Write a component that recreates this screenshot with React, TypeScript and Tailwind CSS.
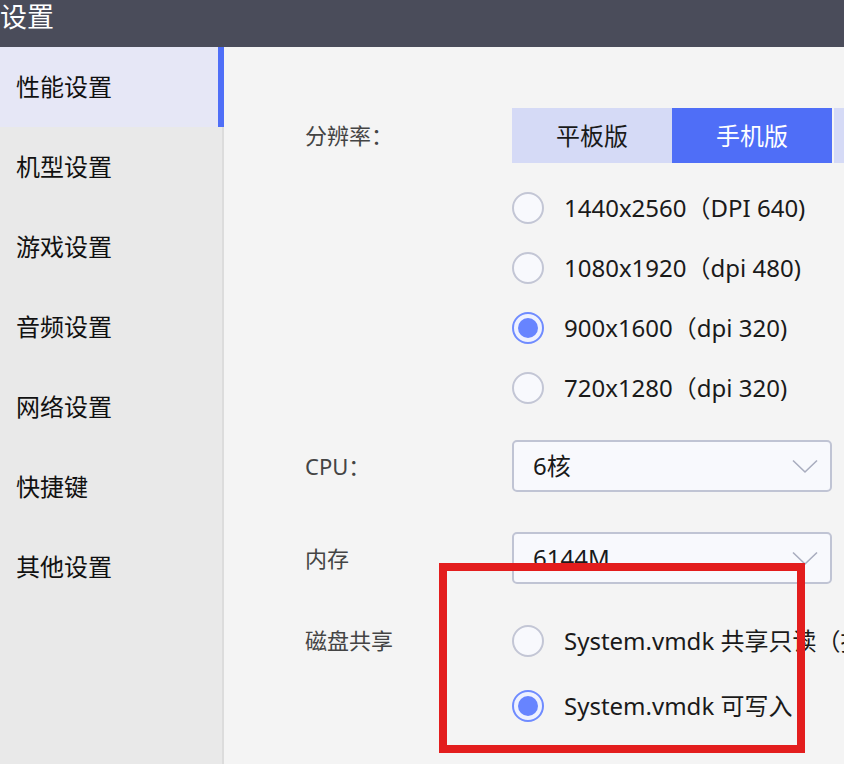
import React, { useState } from 'react';

const font = { fontFamily: '"Noto Sans", "Noto Sans CJK SC", sans-serif' };

const menu = ['性能设置', '机型设置', '游戏设置', '音频设置', '网络设置', '快捷键', '其他设置'];

const resolutions = [
  '1440x2560（DPI 640)',
  '1080x1920（dpi 480)',
  '900x1600（dpi 320)',
  '720x1280（dpi 320)',
];

function Radio({ checked }: { checked: boolean }) {
  if (checked) {
    return (
      <span className="flex h-[32px] w-[32px] shrink-0 items-center justify-center rounded-full border-2 border-[#6f8bff] bg-[#eef1ff]">
        <span className="h-[20px] w-[20px] rounded-full bg-[#6784ff]" />
      </span>
    );
  }
  return <span className="h-[32px] w-[32px] shrink-0 rounded-full border-2 border-[#c3c6d5] bg-[#f8f9fd]" />;
}

function Select({ value }: { value: string }) {
  return (
    <div className="flex h-[52px] w-[320px] items-center justify-between rounded-[5px] border-2 border-[#c0c4d4] bg-[#f8f9fd] pl-[19px] pr-[12px]">
      <span className="text-[24px] text-[#1a1a1a]">{value}</span>
      <svg width="26" height="15" viewBox="0 0 26 15" fill="none">
        <polyline points="1,1.5 13,13 25,1.5" stroke="#a9adbf" strokeWidth="1.6" />
      </svg>
    </div>
  );
}

export default function App() {
  const [active, setActive] = useState(0);
  const [tab, setTab] = useState(1);
  const [res, setRes] = useState(2);
  const [disk, setDisk] = useState(1);

  return (
    <div className="relative flex h-[764px] w-[844px] flex-col overflow-hidden bg-[#f4f4f4]" style={font}>
      <header className="h-[47px] shrink-0 bg-[#4a4c5a] text-[27px] leading-[34px] text-white">设置</header>

      <div className="flex flex-1">
        <aside className="flex w-[224px] shrink-0 flex-col bg-[#e9e9e9]">
          {menu.map((m, i) => (
            <button
              key={m}
              onClick={() => setActive(i)}
              className={
                i === active
                  ? 'flex h-[80px] items-center border-r-[6px] border-[#4f6ef7] bg-[#e6e7f6] pl-[16px] text-left text-[24px] text-[#111]'
                  : 'flex h-[80px] items-center border-r-2 border-[#dcdcdc] pl-[16px] text-left text-[24px] text-[#111]'
              }
            >
              {m}
            </button>
          ))}
          <div className="flex-1 border-r-2 border-[#dcdcdc]" />
        </aside>

        <main className="flex-1 overflow-hidden pl-[81px] pt-[61px]">
          <div className="flex items-center">
            <span className="w-[207px] shrink-0 text-[22px] text-[#444]">分辨率：</span>
            <div className="flex h-[55px] shrink-0 text-[24px]">
              {['平板版', '手机版'].map((t, i) => (
                <button
                  key={t}
                  onClick={() => setTab(i)}
                  className={
                    i === tab
                      ? 'flex w-[160px] items-center justify-center bg-[#4f6ef7] text-white'
                      : 'flex w-[160px] items-center justify-center bg-[#d5daf6] text-[#1a1a1a]'
                  }
                >
                  {t}
                </button>
              ))}
              <span className="ml-[2px] w-[160px] bg-[#d5daf6]" />
            </div>
          </div>

          <div className="ml-[207px] mt-[15px] flex flex-col">
            {resolutions.map((r, i) => (
              <button key={r} onClick={() => setRes(i)} className="flex h-[60px] items-center gap-[20px] whitespace-nowrap text-[24px] text-[#1a1a1a]">
                <Radio checked={res === i} />
                <span>{r}</span>
              </button>
            ))}
          </div>

          <div className="mt-[22px] flex items-center">
            <span className="w-[207px] shrink-0 text-[22px] text-[#444]">CPU：</span>
            <Select value="6核" />
          </div>

          <div className="mt-[40px] flex items-center">
            <span className="w-[207px] shrink-0 text-[22px] text-[#444]">内存</span>
            <Select value="6144M" />
          </div>

          <div className="mt-[24px] flex">
            <span className="flex h-[65px] w-[207px] shrink-0 items-center text-[22px] text-[#444]">磁盘共享</span>
            <div className="flex flex-col">
              {['System.vmdk 共享只读（推荐）', 'System.vmdk 可写入'].map((d, i) => (
                <button key={d} onClick={() => setDisk(i)} className="flex h-[65px] items-center gap-[20px] whitespace-nowrap text-[24px] text-[#1a1a1a]">
                  <Radio checked={disk === i} />
                  <span>{d}</span>
                </button>
              ))}
            </div>
          </div>
        </main>
      </div>

      {/* red annotation frame */}
      <div className="pointer-events-none absolute left-[439px] top-[563px] h-[190px] w-[366px] border-[8px] border-[#e31d1d]" />
    </div>
  );
}
